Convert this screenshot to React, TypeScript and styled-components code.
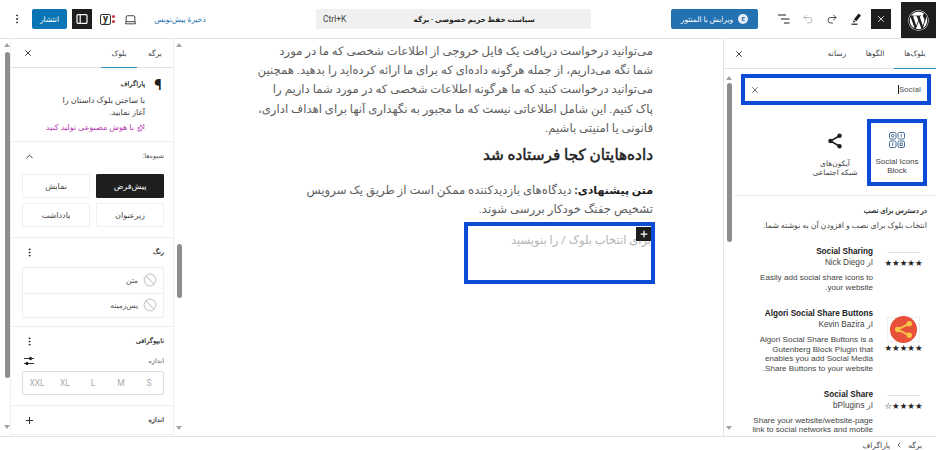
import styled, { createGlobalStyle } from "styled-components";
import { Ban, ChevronLeft, ChevronUp, Laptop, MoreVertical, Plus, Redo2, Sparkles, Undo2, X } from "lucide-react";
import { FaWordpress } from "react-icons/fa";

const GlobalStyle = createGlobalStyle`
  html, body { margin: 0; padding: 0; background: #fff; }
  * { box-sizing: border-box; }
  body { font-family: Roboto, "DejaVu Sans", sans-serif; color: #1e1e1e; }
`;

const Page = styled.div`
  width: 936px;
  height: 450px;
  overflow: hidden;
  display: flex;
  flex-direction: column;
  background: #fff;
`;

const TopBar = styled.header`
  height: 39px;
  flex: none;
  display: flex;
  align-items: center;
  border-bottom: 1px solid #e4e4e4;
`;

const Group = styled.div`
  display: flex;
  align-items: center;
`;

const WpLogo = styled.div`
  width: 35px;
  height: 36px;
  margin-top: 2px;
  background: #1e1e1e;
  color: #fff;
  display: flex;
  align-items: center;
  justify-content: center;
  font-size: 21px;
  margin-left: 10px;
`;

const DarkToggle = styled.div<{ $gap?: number }>`
  width: 20px;
  height: 20px;
  margin-right: ${(p) => p.$gap ?? 0}px;
  background: #1e1e1e;
  color: #fff;
  display: flex;
  align-items: center;
  justify-content: center;
`;

const ToolIcon = styled.div<{ $muted?: boolean; $gap?: number; $width?: number }>`
  width: ${(p) => p.$width ?? 24}px;
  height: 20px;
  margin-right: ${(p) => p.$gap ?? 0}px;
  display: flex;
  align-items: center;
  justify-content: center;
  color: ${(p) => (p.$muted ? "#aaa" : "#1e1e1e")};
`;

const ElementorButton = styled.div`
  width: 87px;
  height: 20px;
  margin-right: 14px;
  background: #2271b1;
  color: #fff;
  border-radius: 2px;
  display: flex;
  align-items: center;
  justify-content: center;
  gap: 5px;
  font-size: 7.5px;
`;

const ElementorMark = styled.span`
  width: 10px;
  height: 10px;
  border-radius: 50%;
  background: #e8eef5;
  color: #2271b1;
  font-size: 6px;
  line-height: 10px;
  text-align: center;
  font-weight: 700;
`;

const CommandBar = styled.div`
  width: 275px;
  height: 20px;
  margin: 0 80px 0 109px;
  background: #f0f0f0;
  border-radius: 2px;
  display: flex;
  align-items: center;
  padding: 0 7px;
  font-size: 7.2px;
  font-weight: 700;
`;

const CommandTitle = styled.span`
  flex: 1;
  text-align: center;
  padding-left: 18px;
`;

const Shortcut = styled.span`
  font-size: 8.5px;
  font-weight: 400;
  color: #444;
`;

const SaveDraft = styled.span`
  width: 54px;
  font-size: 7.5px;
  color: #2271b1;
  text-align: center;
  white-space: nowrap;
`;

const YoastBox = styled.div`
  width: 15px;
  display: flex;
  align-items: center;
  gap: 1px;
  margin-right: 3px;
`;

const YoastGlyph = styled.span`
  width: 11px;
  height: 11px;
  border: 1px solid #333;
  border-radius: 2px;
  font-size: 10px;
  line-height: 8px;
  font-weight: 700;
  text-align: center;
  color: #333;
`;

const YoastDots = styled.span`
  display: flex;
  flex-direction: column;
  gap: 2px;
  & i { width: 3px; height: 3px; border-radius: 50%; background: #d02a3a; display: block; }
`;

const PublishButton = styled.div`
  width: 35px;
  height: 20px;
  background: #0a75b5;
  color: #fff;
  border-radius: 2px;
  margin-right: 5px;
  font-size: 7.5px;
  display: flex;
  align-items: center;
  justify-content: center;
`;

const Body = styled.main`
  flex: 1;
  min-height: 0;
  display: flex;
`;

const BlockPanel = styled.aside`
  width: 213px;
  flex: none;
  border-left: 1px solid #e4e4e4;
  display: flex;
  flex-direction: column;
`;

const Tabs = styled.div`
  height: 30px;
  flex: none;
  display: flex;
  align-items: stretch;
  border-bottom: 1px solid #e4e4e4;
`;

const Tab = styled.div<{ $active?: boolean; $width: number }>`
  width: ${(p) => p.$width}px;
  display: flex;
  align-items: center;
  justify-content: center;
  font-size: 7.5px;
  color: #444;
  border-bottom: 1.5px solid ${(p) => (p.$active ? "#3a8cc4" : "transparent")};
  margin-bottom: -1px;
`;

const TabClose = styled.div<{ $pad: number }>`
  margin-right: auto;
  padding-left: ${(p) => p.$pad}px;
  display: flex;
  align-items: center;
`;

const ScrollRow = styled.div`
  flex: 1;
  min-height: 0;
  display: flex;
`;

const ScrollContent = styled.div`
  flex: 1;
  min-width: 0;
  overflow: hidden;
`;

const Scrollbar = styled.div<{ $width: number; $top?: number; $inset?: number }>`
  width: ${(p) => p.$width}px;
  flex: none;
  display: flex;
  flex-direction: column;
  align-items: center;
  background: #fff;
  padding: ${(p) => p.$top ?? 0}px 0 3px ${(p) => p.$inset ?? 0}px;
`;

const ArrowUp = styled.i`
  width: 0;
  height: 0;
  flex: none;
  margin: 4px 0 3px;
  border: 3px solid transparent;
  border-top: 0;
  border-bottom: 4px solid #a3a3a3;
`;

const ArrowDown = styled(ArrowUp)`
  margin: auto 0 3px;
  border: 3px solid transparent;
  border-bottom: 0;
  border-top: 4px solid #a3a3a3;
`;

const Thumb = styled.i<{ $before: number; $size: number }>`
  width: 5px;
  height: ${(p) => p.$size}px;
  margin-top: ${(p) => p.$before}px;
  flex: none;
  border-radius: 3px;
  background: #8e8e8e;
`;

const SearchBox = styled.div`
  height: 31px;
  margin: 5px 5px 0 7px;
  border: 4px solid #0b4bd6;
  display: flex;
  align-items: center;
  justify-content: space-between;
  padding: 0 6px 0 5px;
  font-size: 8px;
  color: #555;
`;

const Caret = styled.span`
  border-left: 1px solid #222;
  direction: ltr;
`;

const Cards = styled.div`
  display: flex;
  gap: 2px;
  margin: 14px 9px 0 0;
  padding-bottom: 9px;
`;

const BlockCard = styled.div<{ $selected?: boolean }>`
  width: 60px;
  height: 67px;
  border: 4px solid ${(p) => (p.$selected ? "#0b4bd6" : "transparent")};
  display: flex;
  flex-direction: column;
  align-items: center;
  padding-top: 9px;
  gap: 9px;
  color: #1e1e1e;
  font-size: 8px;
  line-height: 9px;
  text-align: center;
  white-space: nowrap;
  font-family: "Liberation Sans", "DejaVu Sans", sans-serif;
`;

const CardLabel = styled.span<{ $small?: boolean }>`
  color: #444;
  font-size: ${(p) => (p.$small ? 7.5 : 8)}px;
`;

const InstallHead = styled.section`
  border-top: 1px solid #eee;
  padding: 10px 9px 0 0;
`;

const InstallTitle = styled.div`
  font-size: 7px;
  line-height: 10px;
  color: #111;
  -webkit-text-stroke: 0.2px #111;
`;

const InstallText = styled.div`
  margin-top: 5px;
  font-size: 7.9px;
  line-height: 10px;
  color: #444;
  white-space: nowrap;
`;

const PluginRow = styled.article<{ $top: number }>`
  display: flex;
  gap: 14px;
  padding: 0 16px 0 0;
  margin-top: ${(p) => p.$top}px;
`;

const PluginMeta = styled.div`
  width: 33px;
  flex: none;
  display: flex;
  flex-direction: column;
  align-items: center;
`;

const PluginLine = styled.div`
  width: 33px;
  height: 5px;
  margin-top: 6px;
  border-top: 1px solid #e4e4e4;
`;

const PluginIcon = styled.div`
  width: 33px;
  height: 25px;
  margin-top: 9px;
  border: 1px solid #f0f0f0;
  display: flex;
  align-items: center;
  justify-content: center;
`;

const Stars = styled.div`
  font-size: 8.5px;
  line-height: 10px;
  margin-top: 1px;
  white-space: nowrap;
  color: #222;
  font-family: "DejaVu Sans", sans-serif;
`;

const PluginText = styled.div`
  width: 125px;
  flex: none;
  color: #444;
  font-family: "Liberation Sans", "DejaVu Sans", sans-serif;
`;

const PluginName = styled.div`
  font-size: 8.2px;
  line-height: 11px;
  font-weight: 700;
  color: #222;
  white-space: nowrap;
`;

const PluginAuthor = styled.div`
  font-size: 8.2px;
  line-height: 12px;
`;

const PluginDesc = styled.div`
  font-size: 8.1px;
  line-height: 9.6px;
  margin-top: 4px;
  white-space: nowrap;
`;

const Editor = styled.section`
  flex: 1;
  min-width: 0;
  display: flex;
  overflow: hidden;
`;

const Canvas = styled.div`
  flex: 1;
  overflow: hidden;
  padding: 3px 70px 0 0;
`;

const Prose = styled.p`
  margin: 0;
  font-size: 11.7px;
  line-height: 19.2px;
  color: #5e5e5e;
  white-space: nowrap;
  & b { color: #1e1e1e; font-size: 11px; }
`;

const Heading = styled.h2`
  margin: 5px 0 14px;
  font-size: 15.3px;
  line-height: 24px;
  font-weight: 400;
  color: #1e1e1e;
  -webkit-text-stroke: 0.5px #1e1e1e;
`;

const Placeholder = styled.div`
  position: relative;
  width: 191px;
  height: 62px;
  margin: 3px -2px 0 0;
  border: 4px solid #0b4bd6;
  padding: 5px 0 0 0;
  font-size: 11.5px;
  line-height: 19px;
  color: #b4b4b4;
  white-space: nowrap;
`;

const InserterButton = styled.span`
  position: absolute;
  top: 1px;
  left: 168px;
  width: 15px;
  height: 14px;
  background: #1e1e1e;
  color: #fff;
  display: flex;
  align-items: center;
  justify-content: center;
`;

const SettingsPanel = styled.aside`
  width: 174px;
  flex: none;
  display: flex;
  flex-direction: column;
  height: 396px;
`;

const SettingsColumn = styled.div`
  width: 164px;
  flex: none;
  border-right: 1px solid #eee;
  border-left: 1px solid #eee;
  overflow: hidden;
`;

const SettingTabs = styled(Tabs)`
  height: 29px;
`;

const Section = styled.section<{ $height: number }>`
  display: flow-root;
  height: ${(p) => p.$height}px;
  border-bottom: 1px solid #eee;
  padding: 0 9px 0 11px;
`;

const BlockHead = styled.div`
  display: flex;
  gap: 7px;
  padding: 8px 0 0;
`;

const Pilcrow = styled.span`
  font-size: 15px;
  line-height: 18px;
  font-weight: 700;
  width: 12px;
  text-align: center;
`;

const BlockTitle = styled.div`
  font-size: 6.6px;
  line-height: 10px;
  margin-top: 3px;
  color: #111;
  -webkit-text-stroke: 0.15px #111;
`;

const BlockDesc = styled.div`
  font-size: 8.2px;
  line-height: 12px;
  color: #444;
  margin-top: 5px;
  white-space: nowrap;
`;

const AiLink = styled.div`
  display: flex;
  align-items: center;
  gap: 3px;
  margin-top: 4px;
  font-size: 8px;
  line-height: 12px;
  color: #b93bb3;
  white-space: nowrap;
`;

const SectionHead = styled.div<{ $top: number }>`
  display: flex;
  align-items: center;
  justify-content: space-between;
  height: 14px;
  margin-top: ${(p) => p.$top}px;
  padding-left: 2px;
  font-size: 6.6px;
  color: #222;
  -webkit-text-stroke: 0.15px #222;
`;

const LightLabel = styled.span`
  color: #555;
  -webkit-text-stroke: 0;
`;

const StyleGrid = styled.div`
  display: grid;
  grid-template-columns: 68px 68px;
  grid-auto-rows: 24px;
  gap: 5px 6px;
  margin-top: 11px;
`;

const StyleButton = styled.div<{ $active?: boolean }>`
  display: flex;
  align-items: center;
  justify-content: center;
  font-size: 8px;
  border: 1px solid ${(p) => (p.$active ? "#1e1e1e" : "#efefef")};
  background: ${(p) => (p.$active ? "#1e1e1e" : "#fff")};
  color: ${(p) => (p.$active ? "#fff" : "#444")};
  border-radius: 1px;
`;

const ColorList = styled.div`
  margin-top: 8px;
  border: 1px solid #eee;
`;

const ColorItem = styled.div`
  height: 24.5px;
  display: flex;
  align-items: center;
  gap: 5px;
  padding: 0 6px;
  font-size: 7.5px;
  color: #555;
  & + & { border-top: 1px solid #eee; }
`;

const SizeControl = styled.div`
  margin-top: 3px;
  height: 24px;
  border: 1px solid #ddd;
  border-radius: 2px;
  display: grid;
  grid-template-columns: repeat(5, 1fr);
  align-items: center;
  text-align: center;
  font-size: 8.5px;
  color: #aaa;
`;

const StatusBar = styled.footer`
  height: 14px;
  flex: none;
  border-top: 1px solid #e4e4e4;
  display: flex;
  align-items: center;
  gap: 5px;
  padding: 3px 14px 0 0;
  font-size: 7.5px;
  color: #444;
`;

const ShareIcon = () => (
  <svg width="18" height="18" viewBox="0 0 24 24" fill="currentColor" stroke="currentColor" strokeWidth="2">
    <path d="M18 5 6 12l12 7" fill="none" />
    <circle cx="18" cy="5" r="2" />
    <circle cx="6" cy="12" r="2" />
    <circle cx="18" cy="19" r="2" />
  </svg>
);

const SocialBlockIcon = () => (
  <svg width="16" height="16" viewBox="0 0 16 16" fill="none" stroke="#4a6f96" strokeWidth="1">
    <rect x=".5" y=".5" width="6.5" height="6.5" rx="1.5" />
    <rect x="9" y=".5" width="6.5" height="6.5" rx="1.5" />
    <rect x=".5" y="9" width="6.5" height="6.5" rx="1.5" />
    <rect x="9" y="9" width="6.5" height="6.5" rx="1.5" />
    <circle cx="3.7" cy="3.7" r="1.3" />
    <path d="M12.2 2.2v3M3.7 10.6v3.2M11 11h2.4v2.5H11z" />
  </svg>
);

const PenIcon = () => (
  <svg width="14" height="14" viewBox="0 0 14 14" fill="#1e1e1e">
    <path d="M9.5 1.6 12 3.4 7.4 9.2 4.9 7.4z" />
    <path d="M4.3 8.2 6.6 9.8 4 10.6z" />
    <rect x="2.5" y="11.6" width="6" height="1.2" />
  </svg>
);

const OutlineIcon = () => (
  <svg width="14" height="12" viewBox="0 0 14 12" fill="none" stroke="#1e1e1e" strokeWidth="1.2">
    <path d="M1 2h8M4 6h8.5M7 10h5.5" />
  </svg>
);

const SidebarIcon = () => (
  <svg width="12" height="12" viewBox="0 0 12 12" fill="none" stroke="#fff" strokeWidth="1.2">
    <rect x="1" y="1.6" width="10" height="8.8" rx="1" />
    <path d="M4.2 1.6v8.8" />
  </svg>
);

const ShareBadge = () => (
  <svg width="29" height="29" viewBox="0 0 30 30">
    <circle cx="15" cy="15" r="14" fill="#e8503a" />
    <path d="M21 9 9 15l12 6" stroke="#f6c544" strokeWidth="2" fill="none" />
    <circle cx="21" cy="9" r="2.8" fill="#f6c544" />
    <circle cx="9" cy="15" r="2.8" fill="#f6c544" />
    <circle cx="21" cy="21" r="2.8" fill="#f6c544" />
  </svg>
);

const SlidersIcon = () => (
  <svg width="10" height="10" viewBox="0 0 10 10" stroke="#1e1e1e" fill="#1e1e1e">
    <path d="M0 2.5h10M0 7.5h10" strokeWidth=".9" />
    <circle cx="6.5" cy="2.5" r="1.2" />
    <circle cx="3" cy="7.5" r="1.2" />
  </svg>
);

export default function App() {
  return (
    <Page dir="rtl">
      <GlobalStyle />
      <TopBar>
        <Group>
          <WpLogo><FaWordpress /></WpLogo>
          <DarkToggle><X size={10} strokeWidth={2} /></DarkToggle>
          <ToolIcon $gap={3}><PenIcon /></ToolIcon>
          <ToolIcon><Redo2 size={12} strokeWidth={1.6} /></ToolIcon>
          <ToolIcon $muted><Undo2 size={12} strokeWidth={1.6} /></ToolIcon>
          <ToolIcon><OutlineIcon /></ToolIcon>
          <ElementorButton>
            <ElementorMark>E</ElementorMark>
            ویرایش با المنتور
          </ElementorButton>
        </Group>
        <CommandBar>
          <CommandTitle>سیاست حفظ حریم خصوصی · برگه</CommandTitle>
          <Shortcut dir="ltr">Ctrl+K</Shortcut>
        </CommandBar>
        <Group>
          <SaveDraft>ذخیرهٔ پیش‌نویس</SaveDraft>
          <ToolIcon $gap={11}><Laptop size={13} strokeWidth={1.5} /></ToolIcon>
          <YoastBox dir="ltr">
            <YoastGlyph>y</YoastGlyph>
            <YoastDots><i /><i /></YoastDots>
          </YoastBox>
          <DarkToggle $gap={8}><SidebarIcon /></DarkToggle>
          <PublishButton>انتشار</PublishButton>
          <ToolIcon $gap={8} $width={14}><MoreVertical size={12} /></ToolIcon>
        </Group>
      </TopBar>

      <Body>
        <BlockPanel>
          <Tabs>
            <Tab $active $width={42}>بلوک‌ها</Tab>
            <Tab $width={38}>الگوها</Tab>
            <Tab $width={38}>رسانه</Tab>
            <TabClose $pad={10}><X size={10} strokeWidth={2} /></TabClose>
          </Tabs>
          <ScrollRow>
            <ScrollContent>
              <SearchBox>
                <Caret>Social</Caret>
                <X size={10} strokeWidth={2} />
              </SearchBox>
              <Cards>
                <BlockCard $selected>
                  <SocialBlockIcon />
                  <CardLabel dir="ltr">Social Icons<br />Block</CardLabel>
                </BlockCard>
                <BlockCard>
                  <ShareIcon />
                  <CardLabel $small>آیکون‌های<br />شبکه اجتماعی</CardLabel>
                </BlockCard>
              </Cards>
              <InstallHead>
                <InstallTitle>در دسترس برای نصب</InstallTitle>
                <InstallText>انتخاب بلوک برای نصب و افزودن آن به نوشته شما.</InstallText>
              </InstallHead>
              <PluginRow $top={15}>
                <PluginMeta>
                  <PluginLine />
                  <Stars>★★★★★</Stars>
                </PluginMeta>
                <PluginText>
                  <PluginName>Social Sharing</PluginName>
                  <PluginAuthor>از Nick Diego</PluginAuthor>
                  <PluginDesc>Easily add social share icons to<br />your website.</PluginDesc>
                </PluginText>
              </PluginRow>
              <PluginRow $top={16}>
                <PluginMeta>
                  <PluginIcon><ShareBadge /></PluginIcon>
                  <Stars>★★★★★</Stars>
                </PluginMeta>
                <PluginText>
                  <PluginName>Algori Social Share Buttons</PluginName>
                  <PluginAuthor>از Kevin Bazira</PluginAuthor>
                  <PluginDesc>
                    Algori Social Share Buttons is a<br />
                    Gutenberg Block Plugin that<br />
                    enables you add Social Media<br />
                    Share Buttons to your website.
                  </PluginDesc>
                </PluginText>
              </PluginRow>
              <PluginRow $top={15}>
                <PluginMeta>
                  <PluginLine />
                  <Stars>★★★★☆</Stars>
                </PluginMeta>
                <PluginText>
                  <PluginName>Social Share</PluginName>
                  <PluginAuthor>از bPlugins</PluginAuthor>
                  <PluginDesc>
                    Share your website/website-page<br />
                    link to social networks and mobile<br />
                    messengers.
                  </PluginDesc>
                </PluginText>
              </PluginRow>
            </ScrollContent>
            <Scrollbar $width={10} $top={3}>
              <ArrowUp />
              <Thumb $before={0} $size={159} />
              <ArrowDown />
            </Scrollbar>
          </ScrollRow>
        </BlockPanel>

        <Editor>
          <Canvas>
            <Prose>
              می‌توانید درخواست دریافت یک فایل خروجی از اطلاعات شخصی که ما در مورد<br />
              شما نگه می‌داریم، از جمله هرگونه داده‌ای که برای ما ارائه کرده‌اید را بدهید. همچنین<br />
              می‌توانید درخواست کنید که ما هرگونه اطلاعات شخصی که در مورد شما داریم را<br />
              پاک کنیم. این شامل اطلاعاتی نیست که ما مجبور به نگهداری آنها برای اهداف اداری،<br />
              قانونی یا امنیتی باشیم.
            </Prose>
            <Heading>داده‌هایتان کجا فرستاده شد</Heading>
            <Prose>
              <b>متن پیشنهادی:</b> دیدگاه‌های بازدیدکننده ممکن است از طریق یک سرویس<br />
              تشخیص جفنگ خودکار بررسی شوند.
            </Prose>
            <Placeholder>
              برای انتخاب بلوک / را بنویسید
              <InserterButton><Plus size={10} strokeWidth={3} /></InserterButton>
            </Placeholder>
          </Canvas>
          <Scrollbar $width={9} $inset={1}>
            <ArrowUp />
            <Thumb $before={194} $size={54} />
            <ArrowDown />
          </Scrollbar>
        </Editor>

        <SettingsPanel>
          <ScrollRow>
            <SettingsColumn>
              <SettingTabs>
                <Tab $width={36}>برگه</Tab>
                <Tab $active $width={36}>بلوک</Tab>
                <TabClose $pad={12}><X size={10} strokeWidth={2} /></TabClose>
              </SettingTabs>
              <Section $height={74}>
                <BlockHead>
                  <Pilcrow>¶</Pilcrow>
                  <div>
                    <BlockTitle>پاراگراف</BlockTitle>
                    <BlockDesc>با ساختن بلوک داستان را<br />آغاز نمایید.</BlockDesc>
                    <AiLink><Sparkles size={8} />با هوش مصنوعی تولید کنید</AiLink>
                  </div>
                </BlockHead>
              </Section>
              <Section $height={96}>
                <SectionHead $top={7}>
                  <LightLabel>شیوه‌ها:</LightLabel>
                  <ChevronUp size={11} strokeWidth={2} />
                </SectionHead>
                <StyleGrid>
                  <StyleButton $active>پیش‌فرض</StyleButton>
                  <StyleButton>نمایش</StyleButton>
                  <StyleButton>زیرعنوان</StyleButton>
                  <StyleButton>یادداشت</StyleButton>
                </StyleGrid>
              </Section>
              <Section $height={89}>
                <SectionHead $top={7}>
                  رنگ
                  <MoreVertical size={11} />
                </SectionHead>
                <ColorList>
                  <ColorItem><Ban size={14} color="#ccc" />متن</ColorItem>
                  <ColorItem><Ban size={14} color="#ccc" />پس‌زمینه</ColorItem>
                </ColorList>
              </Section>
              <Section $height={79}>
                <SectionHead $top={7}>
                  تایپوگرافی
                  <MoreVertical size={11} />
                </SectionHead>
                <SectionHead $top={6}>
                  <LightLabel>اندازه</LightLabel>
                  <SlidersIcon />
                </SectionHead>
                <SizeControl>
                  <span>S</span><span>M</span><span>L</span><span>XL</span><span>XXL</span>
                </SizeControl>
              </Section>
              <Section $height={29}>
                <SectionHead $top={7}>
                  اندازه
                  <Plus size={11} strokeWidth={2} />
                </SectionHead>
              </Section>
            </SettingsColumn>
            <Scrollbar $width={10} $inset={4}>
              <ArrowUp />
              <Thumb $before={2} $size={326} />
              <ArrowDown />
            </Scrollbar>
          </ScrollRow>
        </SettingsPanel>
      </Body>

      <StatusBar>
        برگه
        <ChevronLeft size={8} strokeWidth={2.5} />
        پاراگراف
      </StatusBar>
    </Page>
  );
}
